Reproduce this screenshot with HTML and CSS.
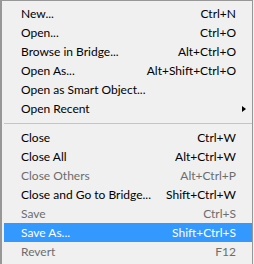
FILE: index.html
```html
<!DOCTYPE html>
<html>
<head>
<meta charset="utf-8">
<link rel="stylesheet" href="styles.css">
</head>
<body>
<div class="menu">
  <div class="item"><span class="label">New...</span><span class="key">Ctrl+N</span></div>
  <div class="item"><span class="label">Open...</span><span class="key">Ctrl+O</span></div>
  <div class="item"><span class="label">Browse in Bridge...</span><span class="key">Alt+Ctrl+O</span></div>
  <div class="item"><span class="label">Open As...</span><span class="key">Alt+Shift+Ctrl+O</span></div>
  <div class="item"><span class="label">Open as Smart Object...</span><span class="key"></span></div>
  <div class="item submenu"><span class="label">Open Recent</span><span class="arrow"></span></div>
  <div class="sep"></div>
  <div class="item"><span class="label">Close</span><span class="key">Ctrl+W</span></div>
  <div class="item"><span class="label">Close All</span><span class="key">Alt+Ctrl+W</span></div>
  <div class="item disabled"><span class="label">Close Others</span><span class="key">Alt+Ctrl+P</span></div>
  <div class="item"><span class="label">Close and Go to Bridge...</span><span class="key">Shift+Ctrl+W</span></div>
  <div class="item disabled"><span class="label">Save</span><span class="key">Ctrl+S</span></div>
  <div class="item active"><span class="label">Save As...</span><span class="key">Shift+Ctrl+S</span></div>
  <div class="item disabled"><span class="label">Revert</span><span class="key">F12</span></div>
</div>
</body>
</html>
```
FILE: styles.css
```css
html, body {
  margin: 0;
  padding: 0;
  background: #f0f0f0;
}
.menu {
  box-sizing: border-box;
  width: 253px;
  height: 264px;
  background: #f0f0f0;
  border-top: 1px solid #979797;
  border-left: 2px solid #979797;
  border-right: 1px solid #979797;
  padding: 3px 0 2px 2px;
  font-family: Lato, sans-serif;
  font-size: 12px;
  color: #000;
}
.item {
  height: 19px;
  display: flex;
  align-items: center;
  justify-content: space-between;
  padding: 0 16px 0 17px;
  white-space: nowrap;
}
.item.disabled {
  color: #6d6d6d;
}
.item.active {
  background: #3399ff;
  color: #fff;
}
.item.submenu {
  padding-right: 6px;
}
.arrow {
  width: 0;
  height: 0;
  border-top: 3.5px solid transparent;
  border-bottom: 3.5px solid transparent;
  border-left: 4px solid #000;
}
.sep {
  height: 10px;
  display: flex;
  align-items: center;
}
.sep::before {
  content: "";
  display: block;
  width: 100%;
  height: 1px;
  background: #c5c5c5;
}
```
